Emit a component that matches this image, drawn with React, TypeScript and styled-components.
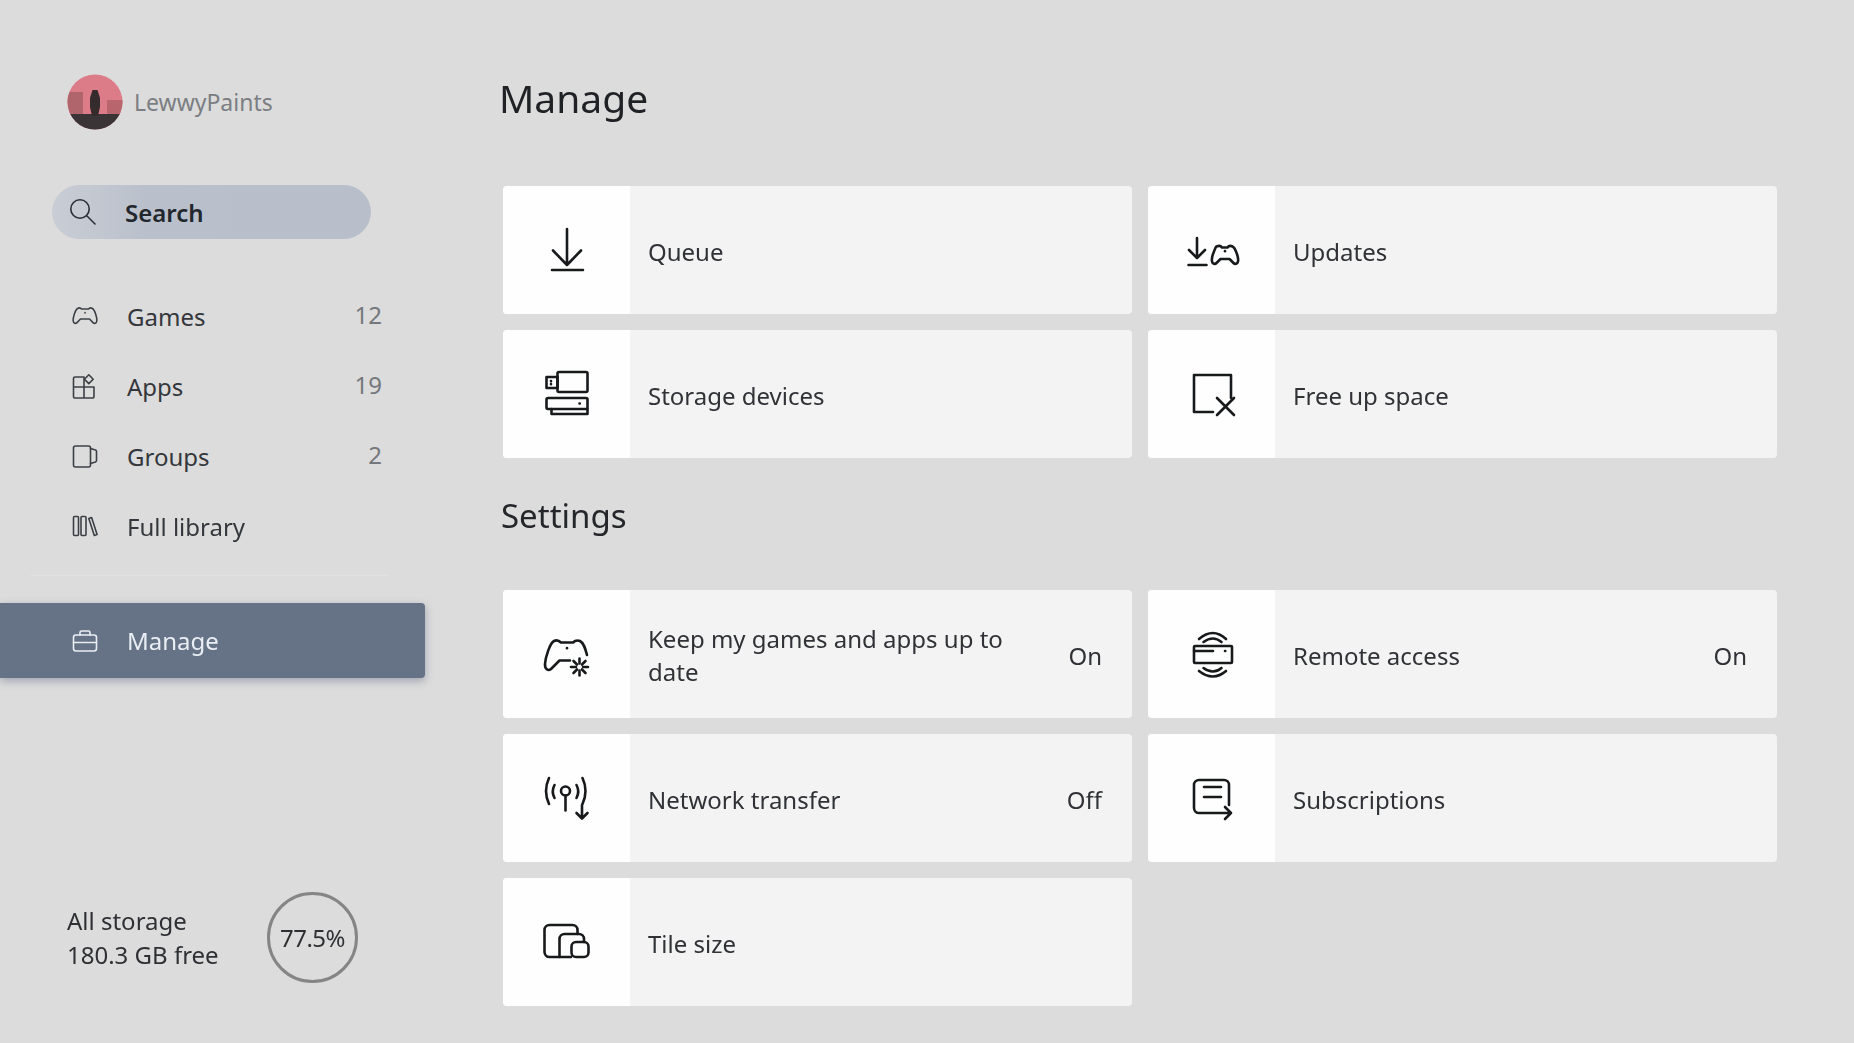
import React from "react";
import styled, { createGlobalStyle } from "styled-components";

const GlobalStyle = createGlobalStyle`
  html, body {
    margin: 0;
    height: 100%;
    overflow: hidden;
    background: #dcdcdc;
  }
  #root {
    height: 100%;
  }
`;

const Page = styled.div`
  width: 100%;
  height: 100vh;
  display: flex;
  background: #dcdcdc;
  color: #2b2d30;
  font-family: "Noto Sans", "Open Sans", sans-serif;
  filter: blur(0.45px);
`;

const Sidebar = styled.aside`
  width: 425px;
  flex: none;
  display: flex;
  flex-direction: column;
  padding-top: 74px;
`;

const Profile = styled.div`
  display: flex;
  align-items: center;
  gap: 11px;
  height: 56px;
  padding-left: 67px;
`;

const Username = styled.span`
  font-size: 23px;
  color: #7b7e82;
`;

const SearchPill = styled.div`
  margin: 55px 0 0 52px;
  width: 319px;
  height: 54px;
  display: flex;
  align-items: center;
  padding-left: 18px;
  box-sizing: border-box;
  border-radius: 27px;
  background: linear-gradient(to right, #c9cdd5, #bac0cb 30%, #b9bfca);
  font-size: 24px;
  font-weight: 600;
  color: #22272d;
`;

const SearchLabel = styled.span`
  margin-left: 29px;
`;

const NavList = styled.nav`
  margin-top: 42px;
  display: flex;
  flex-direction: column;
`;

const NavRow = styled.div`
  height: 70px;
  display: flex;
  align-items: center;
  padding: 0 43px 0 72px;
  font-size: 24px;
  color: #34373b;
`;

const NavIcon = styled.span`
  width: 55px;
  flex: none;
  display: flex;
  align-items: center;
`;

const NavLabel = styled.span`
  flex: 1;
`;

const NavCount = styled.span`
  color: #74787c;
  margin-top: -3px;
`;

const Divider = styled.hr`
  margin: 14px 37px 0 30px;
  border: 0;
  height: 1px;
  background: #e1e1e1;
`;

const ManageRow = styled.div`
  margin-top: 27px;
  height: 75px;
  display: flex;
  align-items: center;
  padding-left: 72px;
  border-radius: 0 4px 4px 0;
  background: #667285;
  box-shadow: 0 3px 9px rgba(70, 80, 110, 0.4);
  font-size: 24px;
  color: #e9eef4;
`;

const Storage = styled.div`
  margin-top: auto;
  margin-bottom: 60px;
  padding-left: 67px;
  display: flex;
  align-items: center;
  gap: 50px;
`;

const StorageText = styled.div`
  width: 150px;
  font-size: 24px;
  line-height: 34px;
  color: #2e3033;
  white-space: nowrap;
`;

const StorageRing = styled.div`
  width: 91px;
  height: 91px;
  flex: none;
  box-sizing: border-box;
  border-radius: 50%;
  border: 3px solid #858585;
  display: flex;
  align-items: center;
  justify-content: center;
  font-size: 24px;
  letter-spacing: -0.5px;
  color: #2e3033;
`;

const Main = styled.main`
  flex: 1;
  padding: 66px 0 0 78px;
`;

const PageTitle = styled.h1`
  margin: 0 0 0 -4px;
  height: 55px;
  line-height: 64px;
  font-size: 39px;
  font-weight: 400;
  color: #1f2124;
`;

const SectionTitle = styled.h2`
  margin: 0 0 0 -2px;
  height: 60px;
  line-height: 60px;
  padding-top: 28px;
  font-size: 33px;
  font-weight: 400;
  color: #24262a;
`;

const CardGrid = styled.div<{ $top?: number }>`
  margin-top: ${(p) => p.$top ?? 0}px;
  display: grid;
  grid-template-columns: 629px 629px;
  grid-auto-rows: 128px;
  gap: 16px;
`;

const CardBox = styled.div`
  display: flex;
  border-radius: 4px;
  overflow: hidden;
  background: #f3f3f3;
`;

const CardTile = styled.div`
  width: 127px;
  flex: none;
  display: flex;
  align-items: center;
  justify-content: center;
  background: #fefefe;
`;

const CardBody = styled.div`
  flex: 1;
  display: flex;
  align-items: center;
  padding: 2px 30px 0 18px;
  font-size: 24px;
  line-height: 33px;
  color: #303236;
`;

const CardLabel = styled.span`
  flex: 1;
  padding-right: 40px;
`;

const CardValue = styled.span`
  flex: none;
`;

const Glyph = styled.svg`
  display: block;
  overflow: visible;
  fill: none;
  stroke: currentColor;
  stroke-linecap: round;
  stroke-linejoin: round;
`;

const Big = ({ children }: { children: React.ReactNode }) => (
  <Glyph width={48} height={48} viewBox="0 0 48 48" strokeWidth={2.6} color="#17191b">
    {children}
  </Glyph>
);

const Small = ({ children, color = "#3c4045" }: { children: React.ReactNode; color?: string }) => (
  <Glyph width={26} height={26} viewBox="0 0 26 26" strokeWidth={1.6} color={color}>
    {children}
  </Glyph>
);

const Avatar = () => (
  <svg width={56} height={56} viewBox="0 0 56 56">
    <defs>
      <clipPath id="av">
        <circle cx={28} cy={28} r={27.5} />
      </clipPath>
    </defs>
    <g clipPath="url(#av)">
      <rect width={56} height={56} fill="#dc7c88" />
      <rect x={0} y={18} width={16} height={24} fill="#b0646c" />
      <rect x={40} y={26} width={16} height={16} fill="#b8656e" />
      <rect x={0} y={40} width={56} height={16} fill="#3a3436" />
      <path d="M25.5 16h5l2.5 8v9l-2 9h-6l-2-9v-9z" fill="#352a2c" />
    </g>
  </svg>
);

const SearchIcon = () => (
  <Small color="#2a3036">
    <circle cx={10} cy={10} r={9.2} />
    <path d="M17 17l8 8" />
  </Small>
);

const GamesIcon = () => (
  <Small>
    <path d="M5.5 5.5C7 4.6 8.6 4.7 9.5 6H16.5C17.4 4.7 19 4.6 20.5 5.5C22.5 6.6 25.2 14.5 24.8 18C24.5 20.6 22.4 21 21 19.6L17.5 16H8.5L5 19.6C3.6 21 1.5 20.6 1.2 18C.8 14.5 3.5 6.6 5.5 5.5Z" />
    <path d="M13 9.5v.4" />
  </Small>
);

const AppsIcon = () => (
  <Small>
    <path d="M12 4H3a1.5 1.5 0 0 0-1.5 1.500V23.500a1.500 1.500 0 0 0 1.500 1.500H20.500a1.500 1.500 0 0 0 1.500-1.500V14H1.500M12 4V25" />
    <path d="M16.800 1.800l4.400 4.400-4.400 4.400-4.400-4.400z" />
  </Small>
);

const GroupsIcon = () => (
  <Small>
    <rect x={1.500} y={3} width={17} height={21} rx={2} />
    <path d="M18.500 5.500l5 1.500a1.500 1.500 0 0 1 1 1.400v9.200a1.500 1.500 0 0 1-1 1.400l-5 1.500" />
  </Small>
);

const LibraryIcon = () => (
  <Small>
    <rect x={1.500} y={3.500} width={5} height={19} rx={1} />
    <rect x={9} y={3.500} width={5} height={19} rx={1} />
    <path d="M16.800 5.500l2.800-1 5.500 17-2.800 1z" />
  </Small>
);

const BriefcaseIcon = () => (
  <Small color="#e9eef4">
    <rect x={1.500} y={7} width={23} height={16} rx={2.500} />
    <path d="M8 7V4.500a1.500 1.500 0 0 1 1.500-1.500h7a1.500 1.500 0 0 1 1.500 1.500V7M1.500 14.500H9M17 14.500h7.500M10 14.500h6" />
  </Small>
);

const QueueIcon = () => (
  <Big>
    <path d="M24 3V39M10 24.500L24 39L38 24.500M9 44H40" />
  </Big>
);

const UpdatesIcon = () => (
  <Big>
    <path d="M9 12V32M1 24L9 32L17 24M.5 39H18.500" />
    <path d="M28.500 20.500C31 19.500 33 20 34 21.500H39.500C40.500 20 42.500 19.500 44.500 20.500C46 21 47 23 48 25.500C49.500 29 50.500 33 50 35.500C49.500 38 47 38.500 45.500 37L41.500 33H32.500L28.500 37C27 38.500 24.500 38 24 35.500C23.500 33 24.500 29 26 25.500C27 23 27.500 21 28.500 20.500Z" />
    <path d="M37 25v.3" />
  </Big>
);

const StorageIcon = () => (
  <Big>
    <rect x={14.500} y={2} width={30} height={20} rx={1.500} />
    <rect x={3.500} y={7} width={11} height={11} />
    <rect x={3.500} y={28} width={41} height={11} rx={1.500} />
    <path d="M8.500 39V44H44.500V39M36.500 33.500h.3M8 11v.2M8 14v.2" />
  </Big>
);

const FreeSpaceIcon = () => (
  <Big>
    <path d="M43 28V5H6V42H25M29 28L46 45M46 28L29 45" />
  </Big>
);

const sunTicks = [0, 45, 90, 135, 180, 225, 270, 315].map((a) => {
  const r = (a * Math.PI) / 180;
  return `M${36.5 + 3.5 * Math.cos(r)} ${37 + 3.5 * Math.sin(r)}L${36.5 + 8.5 * Math.cos(r)} ${37 + 8.5 * Math.sin(r)}`;
}).join("");

const AutoUpdateIcon = () => (
  <Big>
    <path d="M44 25C42.500 19 41 13 37 11C34.500 10 32 10.500 30 12.500H18C16 10.500 13 10 11 11C7 13 2.500 27 2 34C1.800 39 5 41.500 8 39L16.500 30.500H27" />
    <path d="M24 18v.2" />
    <path d={sunTicks} />
  </Big>
);

const RemoteIcon = () => (
  <Big>
    <rect x={6} y={16} width={38} height={17} rx={1} />
    <path d="M6 21H25M37 21h.3" />
    <path d="M11 9Q25 -3 38 9M15.500 12Q25 5 33.500 12" />
    <path d="M15.500 38Q25 45 33.500 38M11 41Q25 52 38 41" />
  </Big>
);

const NetworkIcon = () => (
  <Big>
    <circle cx={22.500} cy={17} r={4.500} />
    <path d="M22.500 21.500V36.500" />
    <path d="M11.500 11Q8 17.500 11.500 24M33.500 11Q37 17.500 33.500 24" />
    <path d="M6 4Q0 17 6 30M39.500 4Q45.500 17 39.500 30" />
    <path d="M39 31V44M33.500 39L39 44.500L44.500 39" />
  </Big>
);

const SubscriptionsIcon = () => (
  <Big>
    <path d="M41 31V11a5 5 0 0 0-5-5H11a5 5 0 0 0-5 5V34a5 5 0 0 0 5 5H43M37 33L43 39L37 45" />
    <path d="M16 13H33M16 23H33" />
  </Big>
);

const TileSizeIcon = () => (
  <Big>
    <path d="M34.500 16V12a5 5 0 0 0-5-5H6.500a5 5 0 0 0-5 5V34a5 5 0 0 0 5 5H28" />
    <path d="M16.500 39V21a5 5 0 0 1 5-5H36a5 5 0 0 1 5 5V24" />
    <rect x={28.500} y={24} width={17} height={15} rx={4.500} />
  </Big>
);

const Card = ({ icon, label, value }: { icon: React.ReactNode; label: string; value?: string }) => (
  <CardBox>
    <CardTile>{icon}</CardTile>
    <CardBody>
      <CardLabel>{label}</CardLabel>
      {value && <CardValue>{value}</CardValue>}
    </CardBody>
  </CardBox>
);

export default function App() {
  return (
    <Page>
      <GlobalStyle />
      <Sidebar>
        <Profile>
          <Avatar />
          <Username>LewwyPaints</Username>
        </Profile>
        <SearchPill>
          <SearchIcon />
          <SearchLabel>Search</SearchLabel>
        </SearchPill>
        <NavList>
          <NavRow>
            <NavIcon><GamesIcon /></NavIcon>
            <NavLabel>Games</NavLabel>
            <NavCount>12</NavCount>
          </NavRow>
          <NavRow>
            <NavIcon><AppsIcon /></NavIcon>
            <NavLabel>Apps</NavLabel>
            <NavCount>19</NavCount>
          </NavRow>
          <NavRow>
            <NavIcon><GroupsIcon /></NavIcon>
            <NavLabel>Groups</NavLabel>
            <NavCount>2</NavCount>
          </NavRow>
          <NavRow>
            <NavIcon><LibraryIcon /></NavIcon>
            <NavLabel>Full library</NavLabel>
          </NavRow>
        </NavList>
        <Divider />
        <ManageRow>
          <NavIcon><BriefcaseIcon /></NavIcon>
          <NavLabel>Manage</NavLabel>
        </ManageRow>
        <Storage>
          <StorageText>
            All storage
            <br />
            180.3 GB free
          </StorageText>
          <StorageRing>77.5%</StorageRing>
        </Storage>
      </Sidebar>
      <Main>
        <PageTitle>Manage</PageTitle>
        <CardGrid $top={65}>
          <Card icon={<QueueIcon />} label="Queue" />
          <Card icon={<UpdatesIcon />} label="Updates" />
          <Card icon={<StorageIcon />} label="Storage devices" />
          <Card icon={<FreeSpaceIcon />} label="Free up space" />
        </CardGrid>
        <SectionTitle>Settings</SectionTitle>
        <CardGrid $top={44}>
          <Card icon={<AutoUpdateIcon />} label="Keep my games and apps up to date" value="On" />
          <Card icon={<RemoteIcon />} label="Remote access" value="On" />
          <Card icon={<NetworkIcon />} label="Network transfer" value="Off" />
          <Card icon={<SubscriptionsIcon />} label="Subscriptions" />
          <Card icon={<TileSizeIcon />} label="Tile size" />
        </CardGrid>
      </Main>
    </Page>
  );
}
